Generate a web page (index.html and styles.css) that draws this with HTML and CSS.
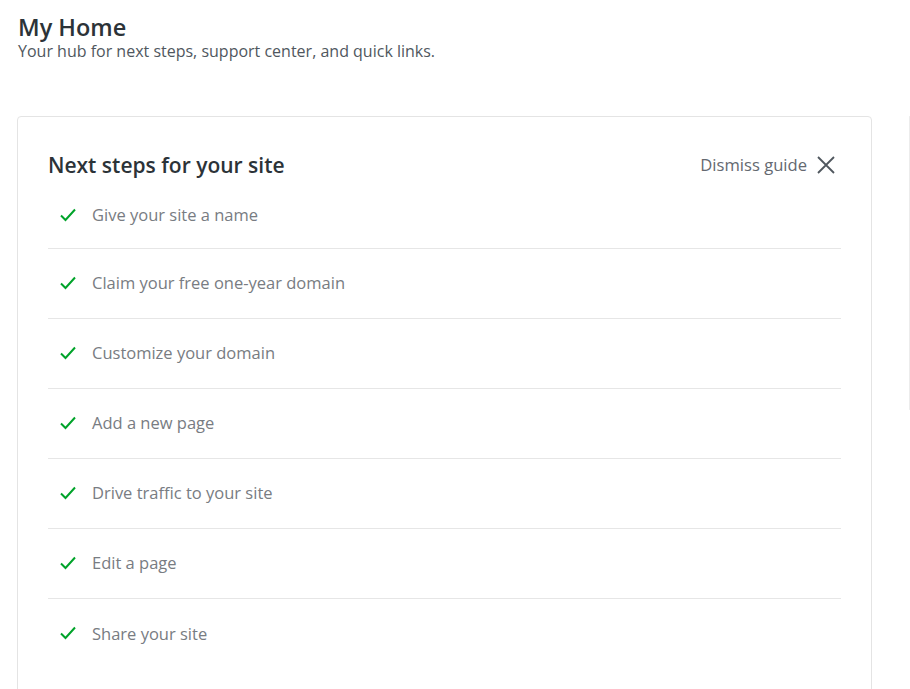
FILE: index.html
```html
<!DOCTYPE html>
<html lang="en">
<head>
    <meta charset="UTF-8">
    <meta name="viewport" content="width=device-width, initial-scale=1.0">
    <title>My Home</title>
    <link rel="stylesheet" href="styles.css">
</head>
<body>
    <header class="page-header">
        <h1>My Home</h1>
        <p>Your hub for next steps, support center, and quick links.</p>
    </header>

    <div class="layout">
        <section class="card">
            <div class="card-head">
                <h2>Next steps for your site</h2>
                <button class="dismiss" type="button">
                    <span>Dismiss guide</span>
                    <svg width="20" height="20" viewBox="0 0 20 20" aria-hidden="true">
                        <path d="M2 2 L18 18 M18 2 L2 18" stroke="#50575e" stroke-width="1.8" fill="none"/>
                    </svg>
                </button>
            </div>
            <ul class="steps">
                <li><span class="check"></span>Give your site a name</li>
                <li><span class="check"></span>Claim your free one-year domain</li>
                <li><span class="check"></span>Customize your domain</li>
                <li><span class="check"></span>Add a new page</li>
                <li><span class="check"></span>Drive traffic to your site</li>
                <li><span class="check"></span>Edit a page</li>
                <li><span class="check"></span>Share your site</li>
            </ul>
        </section>
        <aside class="side-card"></aside>
    </div>

    <template id="checkIcon">
        <svg width="18" height="18" viewBox="0 0 18 18" aria-hidden="true">
            <path d="M2 9.5 L6.5 14 L16 3.5" stroke="#00a32a" stroke-width="2" fill="none"/>
        </svg>
    </template>

    <script>
        const icon = document.getElementById("checkIcon");
        document.querySelectorAll(".check").forEach(el => {
            el.appendChild(icon.content.cloneNode(true));
        });
    </script>
</body>
</html>
```

FILE: styles.css
```css
html, body {
    margin: 0;
    background-color: #ffffff;
    font-family: "Open Sans", "Noto Sans", sans-serif;
    color: #2c3338;
    overflow: hidden;
}
body {
    padding: 0 0 0 17px;
}
.page-header {
    padding-top: 13px;
    padding-left: 1px;
}
.page-header h1 {
    margin: 0;
    font-size: 23.5px;
    font-weight: 600;
    line-height: 28px;
    color: #2c3338;
}
.page-header p {
    margin: 0;
    font-size: 16px;
    line-height: 20px;
    color: #50575e;
}
.layout {
    display: flex;
    gap: 37px;
    margin-top: 55px;
}
.card {
    flex: 0 0 855px;
    box-sizing: border-box;
    border: 1px solid #e4e4e4;
    border-radius: 4px;
    padding: 29px 30px 0 30px;
    height: 600px;
}
.card-head {
    display: flex;
    justify-content: space-between;
    align-items: center;
    height: 37px;
}
.card-head h2 {
    margin: 0;
    font-size: 21px;
    font-weight: 600;
    color: #2c3338;
}
.dismiss {
    display: flex;
    align-items: center;
    gap: 9px;
    border: none;
    background: none;
    padding: 0;
    margin-right: 5px;
    font-family: inherit;
    font-size: 16.6px;
    color: #646970;
    cursor: pointer;
}
.steps {
    list-style: none;
    margin: 0;
    padding: 0;
}
.steps li {
    display: flex;
    align-items: center;
    box-sizing: border-box;
    height: 70px;
    padding-bottom: 2px;
    border-bottom: 1px solid #e6e6e6;
    font-size: 16.5px;
    color: #787c82;
}
.steps li:first-child {
    height: 66px;
}
.steps li:last-child {
    border-bottom: none;
}
.check {
    display: flex;
    width: 18px;
    height: 18px;
    margin: 0 15px 0 11px;
}
.side-card {
    flex: 1 1 0;
    min-width: 0;
    height: 292px;
    border: 1px solid #ececec;
    border-right: none;
    border-radius: 4px 0 0 4px;
}
```
